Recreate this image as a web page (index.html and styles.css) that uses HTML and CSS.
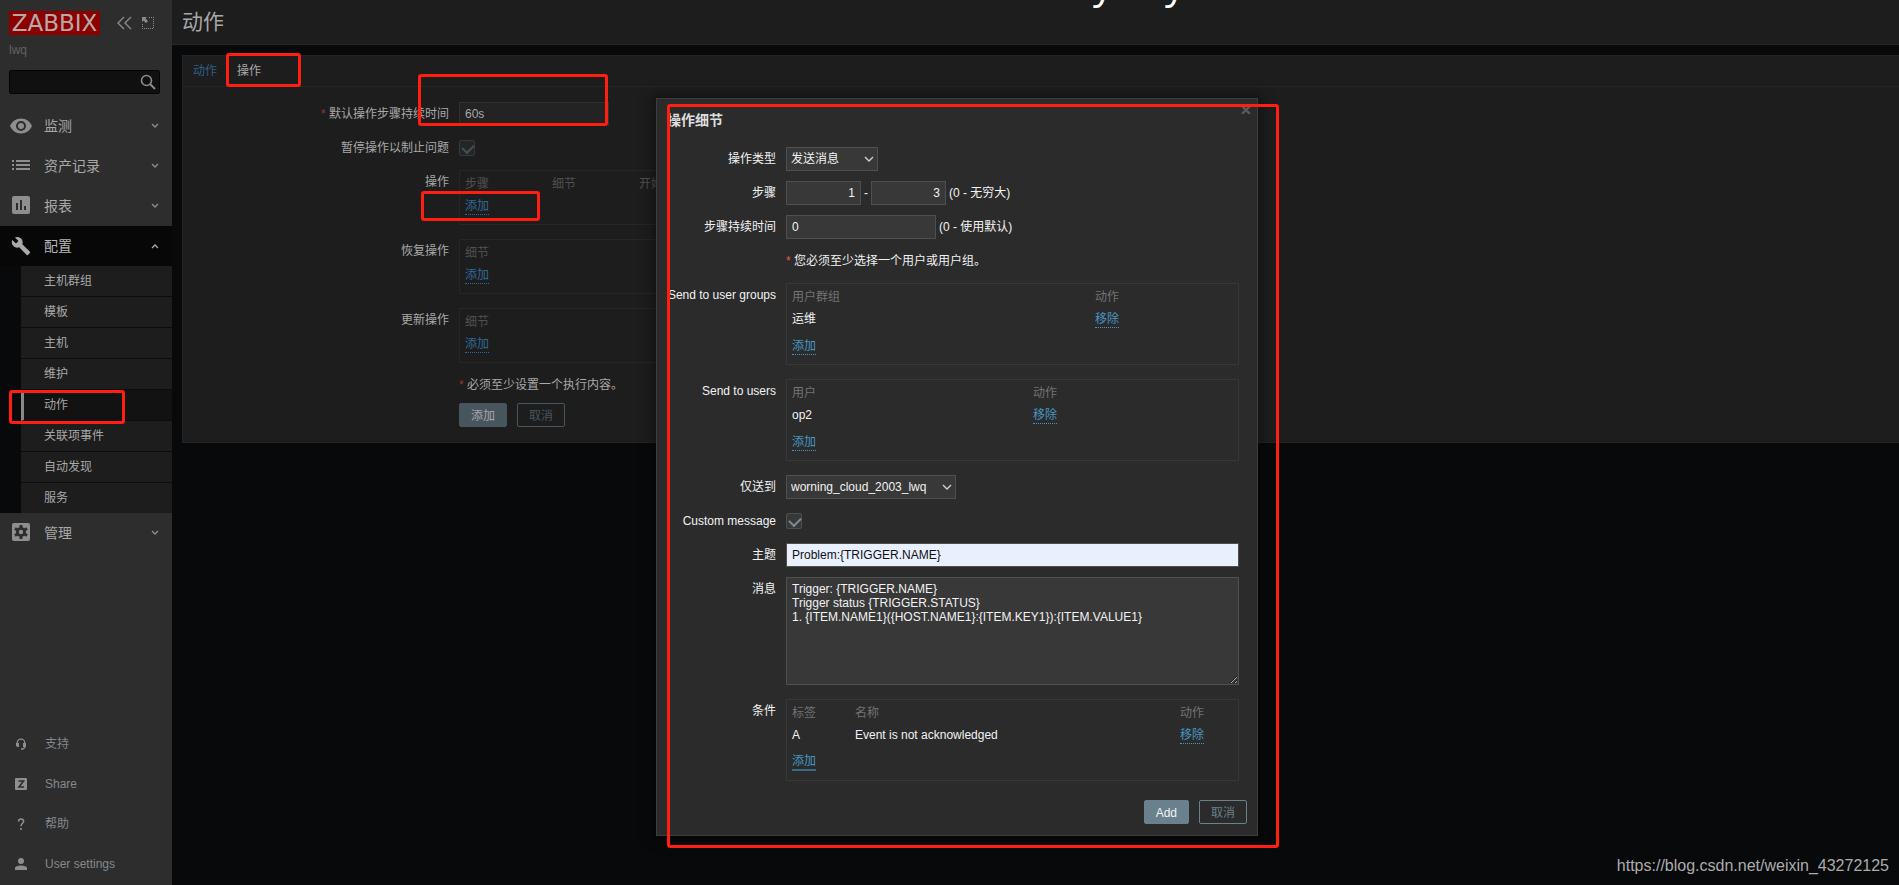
FILE: index.html
```html
<!DOCTYPE html>
<html lang="zh-CN">
<head>
<meta charset="utf-8">
<title>动作</title>
<link rel="stylesheet" href="styles.css">
</head>
<body>
<div class="page">
  <aside class="sidebar">
    <div class="brand">
      <a class="logo" href="#">ZABBIX</a>
      <button class="icon-btn" aria-label="折叠"><svg width="16" height="14" viewBox="0 0 16 14"><path d="M8 1L2 7l6 6M15 1L9 7l6 6" fill="none" stroke="currentColor" stroke-width="1.4"/></svg></button>
      <button class="icon-btn" aria-label="隐藏"><svg width="14" height="14" viewBox="0 0 14 14"><path d="M1 6V1h5L4.500 2.500 7 5 5 7 2.500 4.500z" fill="currentColor"/><path d="M8 1.500h6M12.500 3v10M1 12.500h12M1.500 8v5" fill="none" stroke="currentColor" stroke-dasharray="1 1"/></svg></button>
    </div>
    <div class="server">lwq</div>
    <form class="search">
      <input type="text" aria-label="搜索">
      <button class="icon-btn" type="button" aria-label="搜索"><svg width="16" height="16" viewBox="0 0 16 16"><circle cx="6.500" cy="6.500" r="5" fill="none" stroke="currentColor" stroke-width="1.600"/><path d="M10 10l5 5" stroke="currentColor" stroke-width="2"/></svg></button>
    </form>
    <nav class="menu">
      <a class="item" href="#"><svg width="22" height="18" viewBox="0 0 22 18"><path d="M11 1.500C6 1.500 1.800 4.600 0 9c1.800 4.400 6 7.500 11 7.500S20.200 13.400 22 9C20.200 4.600 16 1.500 11 1.500zM11 14a5 5 0 1 1 0-10 5 5 0 0 1 0 10zm0-8a3 3 0 1 0 0 6 3 3 0 0 0 0-6z" fill="currentColor"/></svg><span>监测</span><svg class="chev" width="8" height="6" viewBox="0 0 8 6"><path d="M1 1l3 3 3-3" fill="none" stroke="currentColor" stroke-width="1.300"/></svg></a>
      <a class="item" href="#"><svg width="22" height="18" viewBox="0 0 22 18"><path d="M2 3h2v2H2zM2 7h2v2H2zM2 11h2v2H2zM6 3h14v2H6zM6 7h14v2H6zM6 11h14v2H6z" fill="currentColor"/></svg><span>资产记录</span><svg class="chev" width="8" height="6" viewBox="0 0 8 6"><path d="M1 1l3 3 3-3" fill="none" stroke="currentColor" stroke-width="1.300"/></svg></a>
      <a class="item" href="#"><svg width="22" height="20" viewBox="0 0 22 20"><path fill-rule="evenodd" d="M4 0h14a2 2 0 0 1 2 2v14a2 2 0 0 1-2 2H4a2 2 0 0 1-2-2V2a2 2 0 0 1 2-2zM6 7v7h2V7zM10 4v10h2V4zM14 10v4h2v-4z" fill="currentColor"/></svg><span>报表</span><svg class="chev" width="8" height="6" viewBox="0 0 8 6"><path d="M1 1l3 3 3-3" fill="none" stroke="currentColor" stroke-width="1.300"/></svg></a>
      <a class="item open" href="#"><svg width="22" height="20" viewBox="0 0 24 24"><path d="M22.700 19l-9.100-9.100c.9-2.300.4-5-1.500-6.900-2-2-5-2.400-7.400-1.300L9 6 6 9 1.600 4.700C.4 7.100.9 10.100 2.900 12.100c1.900 1.900 4.600 2.400 6.900 1.500l9.100 9.100c.4.4 1 .4 1.400 0l2.300-2.300c.5-.4.5-1.100.1-1.400z" fill="currentColor"/></svg><span>配置</span><svg class="chev" width="8" height="6" viewBox="0 0 8 6"><path d="M1 5l3-3 3 3" fill="none" stroke="currentColor" stroke-width="1.300"/></svg></a>
      <div class="submenu">
        <a href="#">主机群组</a>
        <a href="#">模板</a>
        <a href="#">主机</a>
        <a href="#">维护</a>
        <a class="selected" href="#">动作</a>
        <a href="#">关联项事件</a>
        <a href="#">自动发现</a>
        <a href="#">服务</a>
      </div>
      <a class="item" href="#"><svg width="22" height="20" viewBox="0 0 22 20"><rect x="2" width="18" height="18" rx="2" fill="currentColor"/><g fill="#2d2d2d"><circle cx="11" cy="9" r="5"/><path d="M9.500 2h3v14h-3z"/><path d="M9.500 2h3v14h-3z" transform="rotate(60 11 9)"/><path d="M9.500 2h3v14h-3z" transform="rotate(120 11 9)"/></g><circle cx="11" cy="9" r="2.200" fill="currentColor"/></svg><span>管理</span><svg class="chev" width="8" height="6" viewBox="0 0 8 6"><path d="M1 1l3 3 3-3" fill="none" stroke="currentColor" stroke-width="1.300"/></svg></a>
    </nav>
    <nav class="footer-menu">
      <a href="#"><svg width="12" height="12" viewBox="0 0 12 12"><path d="M2.200 7V5a3.800 3.800 0 0 1 7.600 0v4.500L8 11H6" fill="none" stroke="currentColor" stroke-width="1.300"/><path d="M1 5h3v4H2.500L1 8zM8 5h3v3.500L9.500 9H8z" fill="currentColor"/></svg><span>支持</span></a>
      <a href="#"><svg width="12" height="12" viewBox="0 0 12 12"><rect width="12" height="12" rx="1" fill="currentColor"/><path d="M3.500 3h5L4 9h5" fill="none" stroke="#2d2d2d" stroke-width="1.600"/></svg><span>Share</span></a>
      <a href="#"><svg width="12" height="12" viewBox="0 0 12 12"><path d="M3.500 3.500C3.500 1.800 4.500 1 6 1s2.600.9 2.600 2.300C8.600 5.200 6 5.500 6 8.200" fill="none" stroke="currentColor" stroke-width="1.500"/><path d="M5.200 10h1.600v2H5.200z" fill="currentColor"/></svg><span>帮助</span></a>
      <a href="#"><svg width="12" height="12" viewBox="0 0 12 12"><circle cx="6" cy="3" r="3" fill="currentColor"/><path d="M0 12v-2c0-1.500 3-2.500 6-2.500s6 1 6 2.500v2z" fill="currentColor"/></svg><span>User settings</span></a>
    </nav>
  </aside>

  <main class="main">
    <header class="title-bar"><h1>动作</h1></header>
    <section class="panel">
      <div class="tabs"><a href="#">动作</a><a class="current" href="#">操作</a></div>
      <form class="form">
        <label class="label" for="period"><i>*</i> 默认操作步骤持续时间</label>
        <div class="field"><input id="period" class="text w150" type="text" value="60s"></div>
        <label class="label" for="pause">暂停操作以制止问题</label>
        <div class="field"><input id="pause" class="check" type="checkbox" checked></div>
        <span class="label">操作</span>
        <div class="field"><div class="box"><table class="ops"><tr><th class="c87">步骤</th><th class="c87">细节</th><th>开始于</th></tr><tr><td colspan="3"><a class="act" href="#">添加</a></td></tr></table></div></div>
        <span class="label">恢复操作</span>
        <div class="field"><div class="box"><table class="ops"><tr><th>细节</th></tr><tr><td><a class="act" href="#">添加</a></td></tr></table></div></div>
        <span class="label">更新操作</span>
        <div class="field"><div class="box"><table class="ops"><tr><th>细节</th></tr><tr><td><a class="act" href="#">添加</a></td></tr></table></div></div>
        <div class="field note"><i>*</i> 必须至少设置一个执行内容。</div>
        <div class="field actions"><button class="btn primary" type="button">添加</button><button class="btn" type="button">取消</button></div>
      </form>
    </section>
  </main>
</div>

<div class="modal" role="dialog" aria-labelledby="dlg-title">
  <button class="close" aria-label="关闭"><svg width="10" height="8" viewBox="0 0 10 8"><path d="M1 0l8 8M9 0L1 8" stroke="currentColor" stroke-width="2.400"/></svg></button>
  <h2 id="dlg-title">操作细节</h2>
  <form class="form">
    <label class="label" for="optype">操作类型</label>
    <div class="field"><span class="select w92"><select id="optype"><option>发送消息</option></select><svg width="10" height="6" viewBox="0 0 10 6"><path d="M1 1l4 4 4-4" fill="none" stroke="currentColor" stroke-width="1.400"/></svg></span></div>
    <label class="label" for="from">步骤</label>
    <div class="field"><input id="from" class="text num" type="text" value="1"><span class="dash">-</span><input class="text num" type="text" value="3" aria-label="步骤结束"><span class="hint">(0 - 无穷大)</span></div>
    <label class="label" for="dur">步骤持续时间</label>
    <div class="field"><input id="dur" class="text w150" type="text" value="0"><span class="hint">(0 - 使用默认)</span></div>
    <div class="field row"><span><i>*</i> 您必须至少选择一个用户或用户组。</span></div>
    <span class="label">Send to user groups</span>
    <div class="field"><div class="box"><table class="list"><tr><th class="groups">用户群组</th><th>动作</th></tr><tr><td>运维</td><td><a class="act" href="#">移除</a></td></tr><tr><td colspan="2"><a class="act" href="#">添加</a></td></tr></table></div></div>
    <span class="label">Send to users</span>
    <div class="field"><div class="box"><table class="list"><tr><th class="users">用户</th><th>动作</th></tr><tr><td>op2</td><td><a class="act" href="#">移除</a></td></tr><tr><td colspan="2"><a class="act" href="#">添加</a></td></tr></table></div></div>
    <label class="label" for="media">仅送到</label>
    <div class="field"><span class="select w170"><select id="media"><option>worning_cloud_2003_lwq</option></select><svg width="10" height="6" viewBox="0 0 10 6"><path d="M1 1l4 4 4-4" fill="none" stroke="currentColor" stroke-width="1.400"/></svg></span></div>
    <label class="label" for="custom">Custom message</label>
    <div class="field"><input id="custom" class="check" type="checkbox" checked></div>
    <label class="label" for="subject">主题</label>
    <div class="field"><input id="subject" class="text filled" type="text" value="Problem:{TRIGGER.NAME}"></div>
    <label class="label" for="msg">消息</label>
    <div class="field"><textarea id="msg" class="text area">Trigger: {TRIGGER.NAME}
Trigger status {TRIGGER.STATUS}
1. {ITEM.NAME1}({HOST.NAME1}:{ITEM.KEY1}):{ITEM.VALUE1}</textarea></div>
    <span class="label">条件</span>
    <div class="field"><div class="box"><table class="list"><tr><th class="tag">标签</th><th class="name">名称</th><th>动作</th></tr><tr><td>A</td><td>Event is not acknowledged</td><td><a class="act" href="#">移除</a></td></tr><tr><td colspan="3"><a class="act focus" href="#">添加</a></td></tr></table></div></div>
  </form>
  <div class="modal-foot"><button class="btn primary">Add</button><button class="btn">取消</button></div>
</div>

<div class="caption"><span>y</span><span>y</span></div>
<div class="mark mark-tab"></div>
<div class="mark mark-period"></div>
<div class="mark mark-add"></div>
<div class="mark mark-menu"></div>
<div class="mark mark-dialog"></div>
<div class="watermark">https://blog.csdn.net/weixin_43272125</div>
</body>
</html>
```
FILE: styles.css
```css
* { box-sizing: border-box; }
body {
  margin: 0;
  background: #08090b;
  color: #a8a8a8;
  font: 12px/16px "Liberation Sans", "Noto Sans CJK SC", sans-serif;
  overflow: hidden;
}
a { color: inherit; text-decoration: none; }
i { color: #9c3232; font-style: normal; }
button, input, select, textarea { font: inherit; color: inherit; margin: 0; }

.page { display: flex; min-height: 100vh; }

/* Sidebar */
.sidebar {
  width: 172px;
  flex: none;
  display: flex;
  flex-direction: column;
  background: #2d2d2d;
}
.brand { display: flex; align-items: center; padding: 11px 0 0 9px; }
.logo {
  width: 91px;
  height: 24px;
  margin-right: 16px;
  background: #8c0000;
  color: #b5a9a9;
  font-family: "DejaVu Sans", sans-serif;
  font-size: 23px;
  line-height: 24px;
  text-align: center;
}
.icon-btn { display: flex; padding: 0; border: 0; background: none; color: #8a8a8a; }
.brand .icon-btn + .icon-btn { margin-left: 9px; }
.server { padding: 7px 9px 0; color: #5f6366; }
.search {
  display: flex;
  align-items: center;
  height: 24px;
  margin: 12px 12px 0 9px;
  padding-right: 3px;
  border: 1px solid #050505;
  border-radius: 2px;
  background: #101010;
}
.search input { flex: 1; min-width: 0; border: 0; background: none; outline: 0; }
.menu { margin-top: 12px; }
.item {
  display: flex;
  align-items: center;
  height: 40px;
  padding: 0 13px 0 10px;
  font-size: 14px;
}
.item svg { color: #8e8e8e; }
.item span { flex: 1; padding-left: 12px; }
.item.open { background: #070707; color: #b4b4b4; }
.item.open svg { color: #aaa; }
.submenu { padding-left: 21px; background: #08090b; }
.submenu a {
  display: block;
  height: 31px;
  padding-left: 23px;
  border-bottom: 1px solid #0c0c0c;
  background: #1d1d1d;
  line-height: 30px;
}
.submenu a:last-child { height: 30px; border-bottom: 0; }
.submenu .selected { padding-left: 20px; border-left: 3px solid #888; background: #121212; }
.footer-menu { margin-top: auto; padding-bottom: 1px; color: #83898d; }
.footer-menu a { display: flex; align-items: center; height: 40px; padding-left: 15px; }
.footer-menu svg { color: #8e8e8e; }
.footer-menu span { padding-left: 18px; }

/* Page body */
.main { flex: 1; min-width: 0; }
.title-bar { height: 45px; padding: 10px; border-bottom: 1px solid #262626; background: #1d1d1d; }
h1 { margin: 0; font-size: 21px; line-height: 24px; font-weight: 400; }
.panel {
  margin: 10px 0 0 10px;
  padding-bottom: 15px;
  border: 1px solid #232323;
  border-right: 0;
  background: #1d1d1d;
}
.tabs { display: flex; height: 31px; border-bottom: 1px solid #262626; line-height: 30px; }
.tabs a { padding: 0 10px; color: #2e5f86; }
.tabs .current { color: #a8a8a8; }

/* Form rows */
.form { display: grid; grid-template-columns: 266px 1fr; column-gap: 10px; row-gap: 10px; }
.panel .form { padding-top: 15px; }
.label { padding-top: 4px; text-align: right; white-space: nowrap; }
.field { grid-column: 2; display: flex; align-items: center; min-height: 24px; }
.box {
  flex: 1;
  min-width: 0;
  max-width: 600px;
  margin-bottom: 4px;
  padding: 2px 0;
  border: 1px solid #262626;
}
table { border-collapse: collapse; width: 100%; }
th, td { height: 22px; padding: 0 5px; text-align: left; font-weight: 400; line-height: 16px; }
th { color: #505050; }
.ops tr:last-child td { height: 27px; padding-bottom: 5px; }
.list { table-layout: fixed; }
.list tr:last-child td { height: 32px; }
.c87 { width: 87px; }
.act { display: inline-block; line-height: 15px; border-bottom: 1px dotted #2e6a98; color: #2e6a98; }
.text {
  height: 24px;
  padding: 0 5px;
  border: 1px solid #303030;
  border-radius: 0;
  background: #232323;
  outline: 0;
}
.w150 { width: 150px; }
.check {
  appearance: none;
  width: 16px;
  height: 16px;
  border: 1px solid #383838;
  border-radius: 2px;
  background: #252525;
  position: relative;
}
.check::before {
  content: "";
  position: absolute;
  left: 4px;
  top: 1px;
  width: 6px;
  height: 9px;
  border: solid #435158;
  border-width: 0 2px 2px 0;
  transform: rotate(45deg);
}
.field.note { min-height: 16px; white-space: pre; }
.actions { gap: 10px; }
.btn {
  height: 24px;
  padding: 1px 11px 0;
  border: 1px solid #47555d;
  border-radius: 2px;
  background: none;
  color: #47555d;
}
.btn.primary { background: #47555d; color: #a8a8a8; }

/* Dialog */
.modal {
  position: absolute;
  left: 656px;
  top: 98px;
  width: 602px;
  padding: 13px 18px 11px 10px;
  border: 1px solid #3d3d3d;
  background: #2b2b2b;
  box-shadow: 0 0 12px 4px rgba(0, 0, 0, 0.35);
  color: #f2f2f2;
}
.modal h2 { margin: 0; font-size: 14px; line-height: 16px; color: #dedede; }
.modal .form { grid-template-columns: 109px 1fr; padding-top: 19px; }
.modal i { color: #e45959; }
.modal .box { border-color: #383838; }
.modal th { color: #737373; }
.modal .act { color: #4796c4; border-color: #4796c4; }
.modal .act.focus { border-bottom: 2px solid #3a6a88; }
.modal .text, .modal .select { background: #383838; border: 1px solid #4f4f4f; }
.modal .text.filled { width: 100%; background: #e8f0fe; color: #111; }
.modal .area { width: 100%; height: 108px; margin-bottom: 4px; padding: 4px 5px; line-height: 14px; display: block; resize: vertical; }
.modal .check { border-color: #4f4f4f; background: #383838; }
.modal .check::before { border-color: #768d99; }
.close { position: absolute; right: 6px; top: 7px; padding: 0; border: 0; background: none; color: #5a5a5a; line-height: 0; }
.select { position: relative; display: flex; align-items: center; height: 24px; }
.select select { appearance: none; width: 100%; height: 22px; padding: 0 4px; border: 0; background: none; outline: 0; }
.select svg { position: absolute; right: 3px; top: 8px; color: #d0d0d0; pointer-events: none; }
.w92 { width: 92px; }
.w170 { width: 170px; }
.num { width: 75px; text-align: right; }
.dash { width: 10px; text-align: center; }
.hint { padding-left: 3px; }
.groups { width: 303px; }
.users { width: 241px; }
.tag { width: 63px; }
.name { width: 325px; }
.modal-foot { display: flex; justify-content: flex-end; gap: 10px; padding-top: 15px; margin-right: -8px; }
.modal .btn { border-color: #69808d; color: #69808d; }
.modal .btn.primary { background: #69808d; color: #f2f2f2; }

/* Overlays */
.caption {
  position: absolute;
  left: 1093px;
  top: -40px;
  display: flex;
  gap: 52px;
  color: #fff;
  font: 40px/46px "Open Sans", sans-serif;
}
.mark { position: absolute; border: 3px solid #ff1e10; border-radius: 3px; pointer-events: none; }
.mark-tab { left: 226px; top: 53px; width: 75px; height: 34px; }
.mark-period { left: 418px; top: 74px; width: 190px; height: 52px; }
.mark-add { left: 421px; top: 191px; width: 119px; height: 30px; }
.mark-menu { left: 9px; top: 390px; width: 116px; height: 34px; }
.mark-dialog { left: 667px; top: 104px; width: 612px; height: 744px; }
.watermark { position: absolute; right: 10px; bottom: 9px; color: #acacad; font-size: 16px; line-height: 20px; }
```
